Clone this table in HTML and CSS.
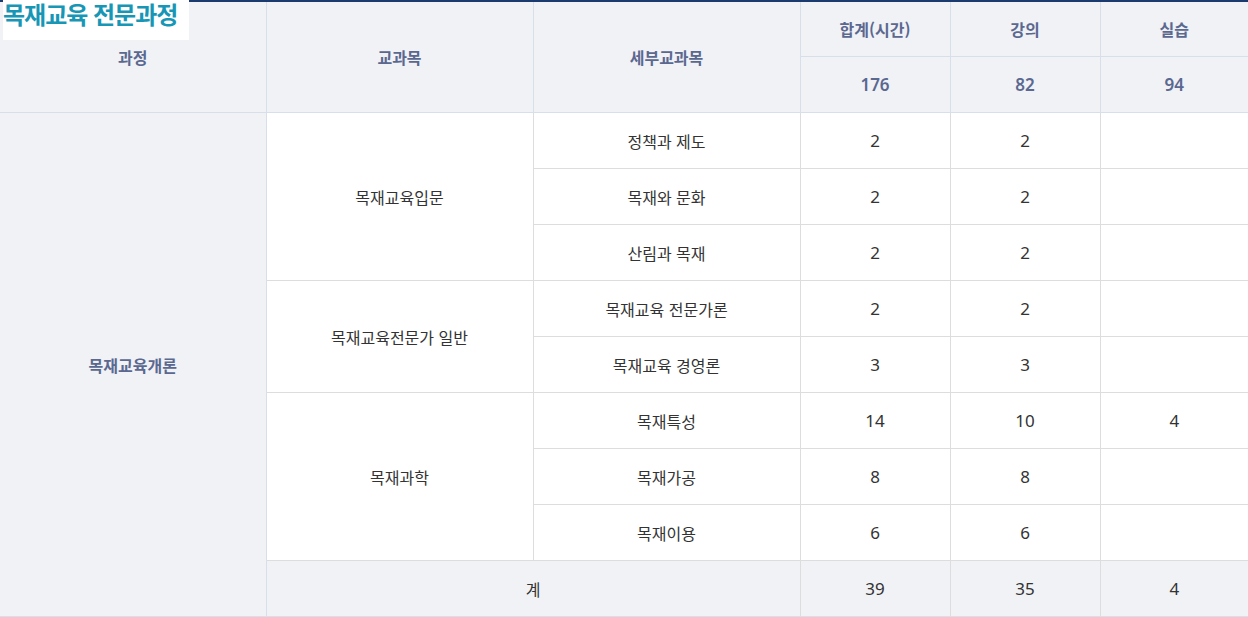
FILE: index.html
```html
<!DOCTYPE html>
<html lang="ko">
<head>
<meta charset="utf-8">
<link rel="stylesheet" href="styles.css">
</head>
<body>
<div class="wrap">
  <h2 class="title">목재교육 전문과정</h2>
  <table class="tbl">
    <colgroup>
      <col class="c1"><col class="c2"><col class="c3"><col class="c4"><col class="c5"><col class="c6">
    </colgroup>
    <thead>
      <tr>
        <th rowspan="2">과정</th>
        <th rowspan="2">교과목</th>
        <th rowspan="2">세부교과목</th>
        <th>합계(시간)</th>
        <th>강의</th>
        <th>실습</th>
      </tr>
      <tr>
        <th class="num">176</th>
        <th class="num">82</th>
        <th class="num">94</th>
      </tr>
    </thead>
    <tbody>
      <tr>
        <th class="course" rowspan="9">목재교육개론</th>
        <td rowspan="3">목재교육입문</td>
        <td>정책과 제도</td><td class="num">2</td><td class="num">2</td><td></td>
      </tr>
      <tr><td>목재와 문화</td><td class="num">2</td><td class="num">2</td><td></td></tr>
      <tr><td>산림과 목재</td><td class="num">2</td><td class="num">2</td><td></td></tr>
      <tr>
        <td rowspan="2">목재교육전문가 일반</td>
        <td>목재교육 전문가론</td><td class="num">2</td><td class="num">2</td><td></td>
      </tr>
      <tr><td>목재교육 경영론</td><td class="num">3</td><td class="num">3</td><td></td></tr>
      <tr>
        <td rowspan="3">목재과학</td>
        <td>목재특성</td><td class="num">14</td><td class="num">10</td><td class="num">4</td>
      </tr>
      <tr><td>목재가공</td><td class="num">8</td><td class="num">8</td><td></td></tr>
      <tr><td>목재이용</td><td class="num">6</td><td class="num">6</td><td></td></tr>
      <tr class="total">
        <td colspan="2">계</td><td class="num">39</td><td class="num">35</td><td class="num">4</td>
      </tr>
    </tbody>
  </table>
</div>
</body>
</html>
```
FILE: styles.css
```css
html, body {
  margin: 0;
  padding: 0;
  background: #ffffff;
}
body {
  font-family: "Noto Sans CJK KR", "Noto Sans", sans-serif;
}
.wrap {
  position: relative;
  width: 1248px;
}
.title {
  position: absolute;
  left: 3px;
  top: 0;
  margin: 0;
  width: 186px;
  height: 40px;
  background: #ffffff;
  color: #1896b6;
  font-size: 24px;
  font-weight: 700;
  line-height: 28px;
  letter-spacing: -1px;
  white-space: nowrap;
  z-index: 2;
}
.tbl {
  width: 1248px;
  border-collapse: collapse;
  table-layout: fixed;
  border-top: 2px solid #1b3a6e;
}
.c1 { width: 266px; }
.c2 { width: 267px; }
.c3 { width: 267px; }
.c4 { width: 150px; }
.c5 { width: 150px; }
.c6 { width: 148px; }
.tbl th, .tbl td {
  height: 55px;
  padding: 0;
  text-align: center;
  vertical-align: middle;
  font-size: 16px;
  line-height: 20px;
}
.tbl thead th {
  background: #f0f2f6;
  color: #5b6890;
  font-weight: 700;
  border: 1px solid #d7dfeb;
  border-top: 0;
}
.tbl thead tr:first-child th {
  height: 54px;
}
.tbl td {
  color: #333333;
  font-weight: 400;
  border: 1px solid #dddddd;
}
.tbl th.course {
  background: #f0f2f6;
  color: #5b6890;
  font-weight: 700;
  border: 1px solid #d7dfeb;
  border-left: 0;
}
.tbl thead th:first-child {
  border-left: 0;
}
.tbl tr > :last-child {
  border-right: 0;
}
.tbl .num {
  font-family: "Noto Sans", sans-serif;
  font-size: 17px;
}
.tbl thead .num {
  font-weight: 600;
}
.tbl .total td {
  background: #f0f2f6;
  border-bottom: 1px solid #d7dfeb;
}
```
